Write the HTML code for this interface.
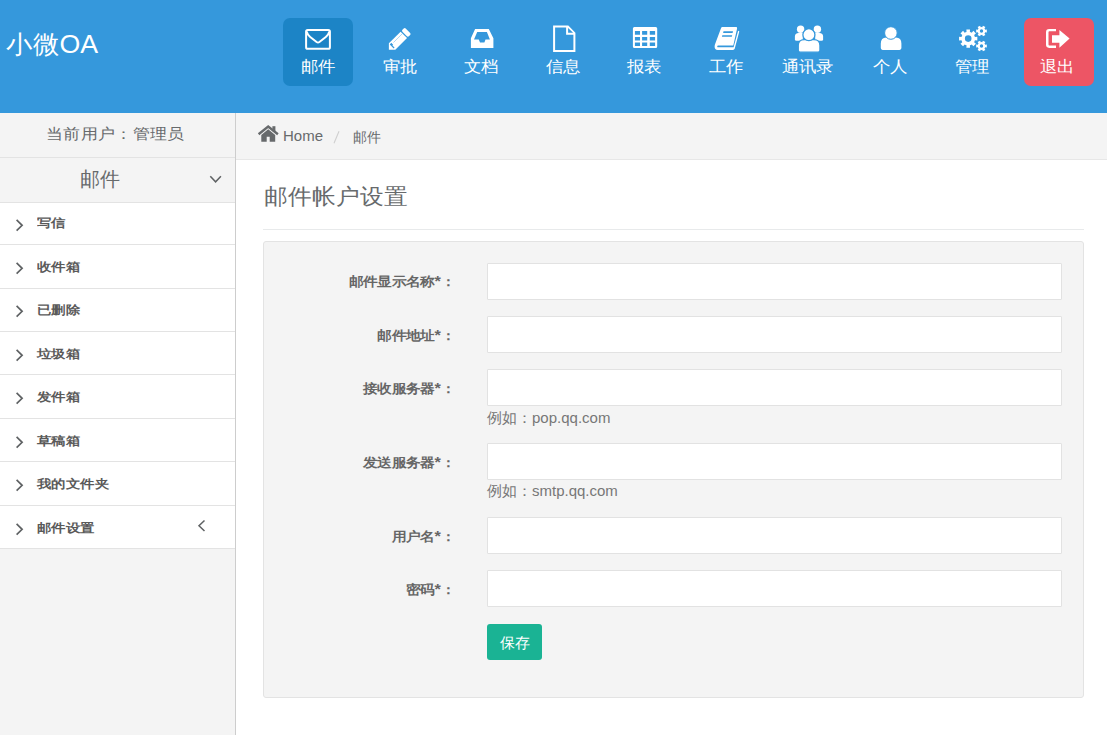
<!DOCTYPE html>
<html><head><meta charset="utf-8">
<style>
*{box-sizing:border-box;margin:0;padding:0}
html,body{width:1107px;height:735px;overflow:hidden;background:#fff;font-family:"Liberation Sans",sans-serif;color:#676a6c}
.abs{position:absolute;white-space:nowrap}
#hdr{position:absolute;left:0;top:0;width:1107px;height:113px;background:#3598dc}
.logo{left:6px;top:29px;font-size:27px;line-height:32px;color:#fff;transform:scale(0.99,0.94);transform-origin:0 50%}
.nav{position:absolute;top:18px;width:70px;height:68px;border-radius:7px}
.nav.sel{background:#1c84c6}
.nav.out{background:#ed5565}
.nt{position:absolute;top:56px;width:90px;margin-left:-45px;text-align:center;font-size:17px;line-height:22px;color:#fff;transform:translateX(-0.8px) scaleY(0.92)}
.ic{position:absolute}
#side{position:absolute;left:0;top:113px;width:235px;height:622px;background:#f4f4f4}
#sideb{position:absolute;left:235px;top:113px;width:1px;height:622px;background:#cdcdcd}
.line{position:absolute;height:1px;background:#e3e3e3}
.mi{position:absolute;left:0;width:235px;background:#fff}
.mt{position:absolute;left:37px;font-size:14px;font-weight:bold;color:#5a5a5a;line-height:20px;transform:scale(1.03,0.86);transform-origin:0 50%}
#bc{position:absolute;left:236px;top:113px;width:871px;height:47px;background:#f4f4f4;border-bottom:1px solid #e7e7e7}
#panel{position:absolute;left:263px;top:241px;width:821px;height:457px;background:#f4f4f4;border:1px solid #e3e3e3;border-radius:3px}
.lbl{position:absolute;right:652px;font-size:14px;font-weight:bold;color:#666;line-height:20px;text-align:right;transform:scale(1.02,0.9);transform-origin:100% 50%}
.ast{font-size:16px;line-height:0}
.inp{position:absolute;left:487px;width:575px;height:37px;background:#fff;border:1px solid #e2e2e2;border-radius:1px}
.help{position:absolute;left:487px;font-size:15px;line-height:20px;color:#777}
</style></head><body>
<div id="hdr">
  <div class="abs logo">小微OA</div>
  <div class="nav sel" style="left:283px"></div>
  <div class="nav out" style="left:1024px"></div>
  <div class="nt" style="left:318.5px">邮件</div>
  <div class="nt" style="left:400.5px">审批</div>
  <div class="nt" style="left:481.5px">文档</div>
  <div class="nt" style="left:563.5px">信息</div>
  <div class="nt" style="left:645.3px">报表</div>
  <div class="nt" style="left:727px">工作</div>
  <div class="nt" style="left:808.8px">通讯录</div>
  <div class="nt" style="left:890.7px">个人</div>
  <div class="nt" style="left:972.6px">管理</div>
  <div class="nt" style="left:1057.5px">退出</div>
  <svg class="ic" style="left:0;top:0" width="1107" height="113" viewBox="0 0 1107 113">
<g fill="none" stroke="#fff" stroke-width="2" stroke-linejoin="round">
<rect x="306.1" y="29.9" width="23.8" height="18.9" rx="1.6"/>
<path d="M306.6,31.6 Q307.6,35 310.2,37 L316.6,42 Q318,43 319.4,42 L325.8,37 Q328.4,35 329.4,31.6"/>
</g>
<g fill="#fff">
<g transform="matrix(0.7071,-0.7071,0.7071,0.7071,388.9,49.8)">
<path d="M0,0 L4.55,-4.55 L21.1,-4.55 L21.1,4.55 L4.55,4.55 Z"/>
<rect x="22.3" y="-4.55" width="4.6" height="9.1" rx="1.4"/>
<path fill="#3598dc" d="M4.4,-3.2 L6.6,-3.2 L6.6,-0.6 L5.6,-0.6 L5.6,2.4 L4.4,2.4 Z"/>
<path stroke="#3598dc" stroke-width="0.6" opacity="0.6" d="M8.3,-1.9 L20.8,-1.9"/>
</g>
<path d="M475.1,28.9 L488.8,28.9 L493.4,38.2 L493.4,47.9 L470.9,47.9 L470.9,38.2 Z M477.2,32 L474,39.6 L478.8,39.6 L480,42.4 L484.4,42.4 L485.5,39.6 L489.9,39.6 L486.9,32 Z" fill-rule="evenodd"/>
<path fill-rule="evenodd" d="M553.1,25.6 L568.3,25.6 L575.4,32.7 L575.4,51.9 L553.1,51.9 Z M555.1,27.6 L566.1,27.6 L566.1,34.7 L573.4,34.7 L573.4,49.9 L555.1,49.9 Z M568.1,27.9 L573.1,32.7 L568.1,32.7 Z"/>
<path fill-rule="evenodd" d="M634.4,27.1 L655.7,27.1 Q657.2,27.1 657.2,28.6 L657.2,46.4 Q657.2,47.9 655.7,47.9 L634.4,47.9 Q632.9,47.9 632.9,46.4 L632.9,28.6 Q632.9,27.1 634.4,27.1 Z
M634.9,31 h5.1 v3.7 h-5.1 Z M642.1,31 h5.1 v3.7 h-5.1 Z M649.8,31 h5.3 v3.7 h-5.3 Z
M634.9,37 h5.1 v3.5 h-5.1 Z M642.1,37 h5.1 v3.5 h-5.1 Z M649.8,37 h5.3 v3.5 h-5.3 Z
M634.9,42.6 h5.1 v3.4 h-5.1 Z M642.1,42.6 h5.1 v3.4 h-5.1 Z M649.8,42.6 h5.3 v3.4 h-5.3 Z"/>
<path d="M722.3,27.1 L736,27.1 Q737.4,27.1 737.1,28.5 L733.3,45.6 L718.2,45.6 Q717.2,45.6 717.2,46.4 Q717.2,47.3 718.2,47.3 L733.6,47.3 L738,31.2 Q738.6,30.2 739.3,31.4 L734.7,48.8 Q734.3,49.9 733,49.9 L717.6,49.9 Q714.6,49.9 714.6,46.8 Q714.6,45.2 715.3,43.6 L721,28.3 Q721.4,27.1 722.3,27.1 Z"/>
<path fill="#3598dc" d="M723.5,31.3 L733,31.3 L732.6,32.9 L723.1,32.9 Z M722.3,35.2 L732.2,35.2 L731.8,36.8 L721.9,36.8 Z"/>
<circle cx="800.6" cy="29.3" r="3.7"/>
<circle cx="817.4" cy="29.3" r="3.7"/>
<path d="M796.4,40.8 Q794.9,40.8 794.9,39.2 L794.9,36.6 Q794.9,33 798.6,33 L802.8,33 L802.8,40.8 Z"/>
<path d="M821.6,40.8 Q823.1,40.8 823.1,39.2 L823.1,36.6 Q823.1,33 819.4,33 L815.2,33 L815.2,40.8 Z"/>
<path stroke="#3598dc" stroke-width="1.2" d="M800.3,52.2 Q798.3,52.2 798.3,50.2 L798.3,45.6 Q798.3,39.6 804.3,39.6 L813.9,39.6 Q819.9,39.6 819.9,45.6 L819.9,50.2 Q819.9,52.2 817.9,52.2 Z"/>
<circle stroke="#3598dc" stroke-width="1.2" cx="808.9" cy="34.7" r="6"/>
<path d="M882.6,49.9 Q880.8,49.9 880.8,48.1 L880.8,43.6 Q880.8,37.6 886.3,37.6 L895.9,37.6 Q901.4,37.6 901.4,43.6 L901.4,48.1 Q901.4,49.9 899.6,49.9 Z"/>
<circle stroke="#3598dc" stroke-width="1" cx="890.9" cy="33" r="6.3"/>
<path fill-rule="evenodd" d="M974.57,35.96 L974.89,36.92 L977.32,36.79 L977.32,40.41 L974.89,40.28 L974.57,41.24 L974.12,42.15 L975.93,43.77 L973.37,46.33 L971.75,44.52 L970.84,44.97 L969.88,45.29 L970.01,47.72 L966.39,47.72 L966.52,45.29 L965.56,44.97 L964.65,44.52 L963.03,46.33 L960.47,43.77 L962.28,42.15 L961.83,41.24 L961.51,40.28 L959.08,40.41 L959.08,36.79 L961.51,36.92 L961.83,35.96 L962.28,35.05 L960.47,33.43 L963.03,30.87 L964.65,32.68 L965.56,32.23 L966.52,31.91 L966.39,29.48 L970.01,29.48 L969.88,31.91 L970.84,32.23 L971.75,32.68 L973.37,30.87 L975.93,33.43 L974.12,35.05 Z M971.50,38.60 A3.3,3.3 0 1,0 964.90,38.60 A3.3,3.3 0 1,0 971.50,38.60 Z"/>
<path fill-rule="evenodd" d="M984.88,29.05 L985.19,29.75 L986.81,29.58 L986.81,32.42 L985.19,32.25 L984.88,32.95 L984.43,33.57 L985.39,34.89 L982.92,36.31 L982.26,34.83 L981.50,34.90 L980.74,34.83 L980.08,36.31 L977.61,34.89 L978.57,33.57 L978.12,32.95 L977.81,32.25 L976.19,32.42 L976.19,29.58 L977.81,29.75 L978.12,29.05 L978.57,28.43 L977.61,27.11 L980.08,25.69 L980.74,27.17 L981.50,27.10 L982.26,27.17 L982.92,25.69 L985.39,27.11 L984.43,28.43 Z M983.20,31.00 A1.7,1.7 0 1,0 979.80,31.00 A1.7,1.7 0 1,0 983.20,31.00 Z"/>
<path fill-rule="evenodd" d="M984.88,44.05 L985.19,44.75 L986.81,44.58 L986.81,47.42 L985.19,47.25 L984.88,47.95 L984.43,48.57 L985.39,49.89 L982.92,51.31 L982.26,49.83 L981.50,49.90 L980.74,49.83 L980.08,51.31 L977.61,49.89 L978.57,48.57 L978.12,47.95 L977.81,47.25 L976.19,47.42 L976.19,44.58 L977.81,44.75 L978.12,44.05 L978.57,43.43 L977.61,42.11 L980.08,40.69 L980.74,42.17 L981.50,42.10 L982.26,42.17 L982.92,40.69 L985.39,42.11 L984.43,43.43 Z M983.20,46.00 A1.7,1.7 0 1,0 979.80,46.00 A1.7,1.7 0 1,0 983.20,46.00 Z"/>
<path d="M1056,28.9 L1049.2,28.9 Q1046,28.9 1046,32.2 L1046,44.6 Q1046,47.9 1049.2,47.9 L1056,47.9 L1056,45.5 L1049.4,45.5 Q1048.5,45.5 1048.5,44.6 L1048.5,32.2 Q1048.5,31.3 1049.4,31.3 L1056,31.3 Z"/>
<path d="M1052,35.3 L1059.4,35.3 L1059.4,30 L1069.6,38.4 L1059.4,47.8 L1059.4,42.7 L1052,42.7 Z"/>
</g>
</svg>
</div>
<div id="side"></div>
<div id="sideb"></div>
<div id="bc"></div>
<div class="abs" style="left:46px;top:123px;font-size:17px;line-height:22px;transform:scale(1.02,0.9);transform-origin:0 60%">当前用户：管理员</div>
<div class="line" style="left:0;top:157px;width:235px"></div>
<div class="abs" style="left:80px;top:167px;font-size:20px;line-height:24px">邮件</div>
<div class="mi" style="top:203px;height:345px"></div>
<div class="line" style="left:0;top:202px;width:235px"></div>
<div class="mt" style="top:213.0px">写信</div>
<svg class="abs" style="left:14px;top:217.65px" width="12" height="16" viewBox="0 0 12 16"><path d="M2.6,1.9 L8.1,7.3 L2.6,12.7" fill="none" stroke="#5f6264" stroke-width="1.7"/></svg>
<div class="mt" style="top:257.0px">收件箱</div>
<svg class="abs" style="left:14px;top:260.70px" width="12" height="16" viewBox="0 0 12 16"><path d="M2.6,1.9 L8.1,7.3 L2.6,12.7" fill="none" stroke="#5f6264" stroke-width="1.7"/></svg>
<div class="mt" style="top:299.5px">已删除</div>
<svg class="abs" style="left:14px;top:304.20px" width="12" height="16" viewBox="0 0 12 16"><path d="M2.6,1.9 L8.1,7.3 L2.6,12.7" fill="none" stroke="#5f6264" stroke-width="1.7"/></svg>
<div class="mt" style="top:343.5px">垃圾箱</div>
<svg class="abs" style="left:14px;top:347.70px" width="12" height="16" viewBox="0 0 12 16"><path d="M2.6,1.9 L8.1,7.3 L2.6,12.7" fill="none" stroke="#5f6264" stroke-width="1.7"/></svg>
<div class="mt" style="top:387.0px">发件箱</div>
<svg class="abs" style="left:14px;top:391.20px" width="12" height="16" viewBox="0 0 12 16"><path d="M2.6,1.9 L8.1,7.3 L2.6,12.7" fill="none" stroke="#5f6264" stroke-width="1.7"/></svg>
<div class="mt" style="top:430.5px">草稿箱</div>
<svg class="abs" style="left:14px;top:434.90px" width="12" height="16" viewBox="0 0 12 16"><path d="M2.6,1.9 L8.1,7.3 L2.6,12.7" fill="none" stroke="#5f6264" stroke-width="1.7"/></svg>
<div class="mt" style="top:474.0px">我的文件夹</div>
<svg class="abs" style="left:14px;top:478.40px" width="12" height="16" viewBox="0 0 12 16"><path d="M2.6,1.9 L8.1,7.3 L2.6,12.7" fill="none" stroke="#5f6264" stroke-width="1.7"/></svg>
<div class="mt" style="top:517.5px">邮件设置</div>
<svg class="abs" style="left:14px;top:521.90px" width="12" height="16" viewBox="0 0 12 16"><path d="M2.6,1.9 L8.1,7.3 L2.6,12.7" fill="none" stroke="#5f6264" stroke-width="1.7"/></svg>
<div class="line" style="left:0;top:244px;width:235px"></div>
<div class="line" style="left:0;top:288px;width:235px"></div>
<div class="line" style="left:0;top:331px;width:235px"></div>
<div class="line" style="left:0;top:374px;width:235px"></div>
<div class="line" style="left:0;top:418px;width:235px"></div>
<div class="line" style="left:0;top:461px;width:235px"></div>
<div class="line" style="left:0;top:505px;width:235px"></div>
<div class="line" style="left:0;top:548px;width:235px"></div>
<svg class="abs" style="left:208px;top:173px" width="16" height="14" viewBox="0 0 16 14"><path d="M2.3,3.3 L7.6,8.8 L12.9,3.3" fill="none" stroke="#5f6264" stroke-width="1.5"/></svg>
<svg class="abs" style="left:195px;top:518px" width="14" height="16" viewBox="0 0 14 16"><path d="M9.5,2.5 L4,7.8 L9.5,13" fill="none" stroke="#5f6264" stroke-width="1.5"/></svg>
<svg class="abs" style="left:0;top:113px" width="300" height="40" viewBox="0 113 300 40"><g fill="#676a6c"><path d="M258.6,134.3 L268.2,126.6 L277.9,134.3" fill="none" stroke="#676a6c" stroke-width="2.4"/><rect x="272.4" y="126.2" width="3" height="5"/><path fill-rule="evenodd" d="M261.3,135 L268.2,129.3 L275.2,135 L275.2,141.8 L261.3,141.8 Z M266.7,136.8 L269.7,136.8 L269.7,141.8 L266.7,141.8 Z"/></g></svg>
<div class="abs" style="left:283px;top:126px;font-size:15px;line-height:20px">Home</div>
<svg class="abs" style="left:330px;top:128px" width="12" height="18" viewBox="330 128 12 18"><path d="M334,143.3 L339,131.3" stroke="#cfcfcf" stroke-width="1.1"/></svg>
<div class="abs" style="left:353px;top:127px;font-size:14px;line-height:20px">邮件</div>
<div class="abs" style="left:264px;top:181px;font-size:24px;line-height:30px;transform:scaleY(0.93);transform-origin:0 58%">邮件帐户设置</div>
<div class="line" style="left:263px;top:229px;width:821px;background:#e8eaeb"></div>
<div id="panel"></div>
<div class="lbl" style="top:271px">邮件显示名称<span class="ast">*</span>：</div>
<div class="lbl" style="top:325px">邮件地址<span class="ast">*</span>：</div>
<div class="lbl" style="top:378px">接收服务器<span class="ast">*</span>：</div>
<div class="lbl" style="top:452px">发送服务器<span class="ast">*</span>：</div>
<div class="lbl" style="top:526px">用户名<span class="ast">*</span>：</div>
<div class="lbl" style="top:579px">密码<span class="ast">*</span>：</div>
<div class="inp" style="top:263px"></div>
<div class="inp" style="top:316px"></div>
<div class="inp" style="top:369px"></div>
<div class="inp" style="top:443px"></div>
<div class="inp" style="top:517px"></div>
<div class="inp" style="top:570px"></div>
<div class="help" style="top:408px">例如：pop.qq.com</div>
<div class="help" style="top:481px">例如：smtp.qq.com</div>
<div class="abs" style="left:487px;top:624px;width:55px;height:36px;background:#1ab394;border-radius:3px;color:#fff;font-size:15px;line-height:38px;text-align:center">保存</div>
</body></html>
